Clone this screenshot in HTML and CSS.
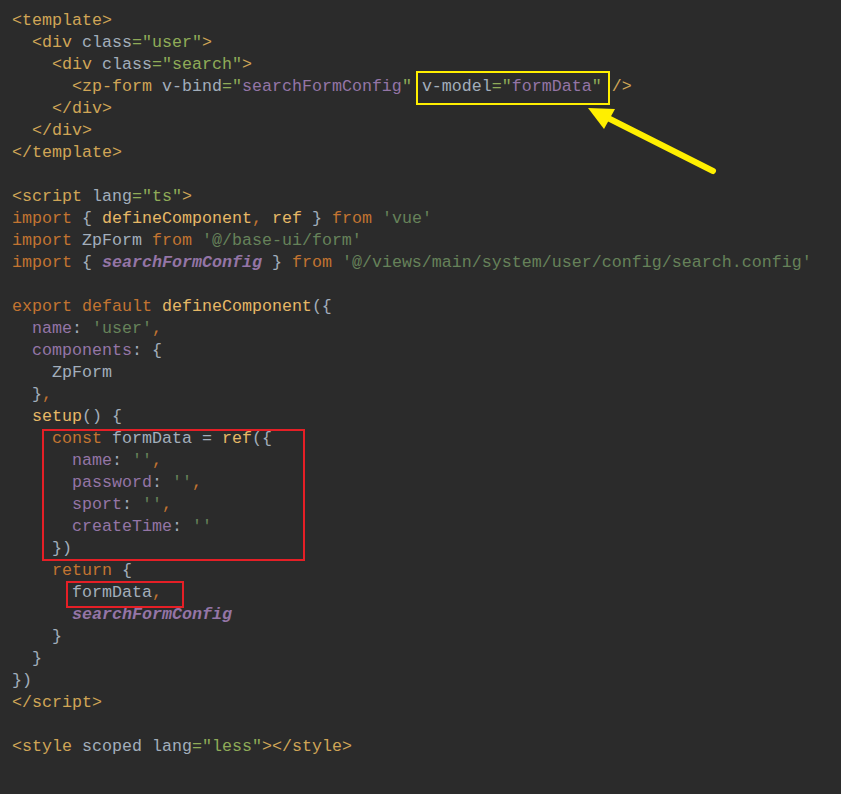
FILE: index.html
```html
<!DOCTYPE html>
<html lang="en">
<head>
    <meta charset="UTF-8">
    <title>user.vue</title>
    <link rel="stylesheet" href="styles.css">
</head>
<body>
    <div class="editor">
<pre class="code"><span class="tag">&lt;template&gt;</span>
  <span class="tag">&lt;div</span> <span class="attr">class</span><span class="val">="user"</span><span class="tag">&gt;</span>
    <span class="tag">&lt;div</span> <span class="attr">class</span><span class="val">="search"</span><span class="tag">&gt;</span>
      <span class="tag">&lt;zp-form</span> <span class="attr">v-bind</span><span class="val">="</span><span class="prop">searchFormConfig</span><span class="val">"</span> <span class="attr">v-model</span><span class="val">="</span><span class="prop">formData</span><span class="val">"</span> <span class="tag">/&gt;</span>
    <span class="tag">&lt;/div&gt;</span>
  <span class="tag">&lt;/div&gt;</span>
<span class="tag">&lt;/template&gt;</span>

<span class="tag">&lt;script</span> <span class="attr">lang</span><span class="val">="ts"</span><span class="tag">&gt;</span>
<span class="kw">import</span> { <span class="fn">defineComponent</span><span class="kw">,</span> <span class="fn">ref</span> } <span class="kw">from</span> <span class="str">'vue'</span>
<span class="kw">import</span> ZpForm <span class="kw">from</span> <span class="str">'@/base-ui/form'</span>
<span class="kw">import</span> { <span class="const">searchFormConfig</span> } <span class="kw">from</span> <span class="str">'@/views/main/system/user/config/search.config'</span>

<span class="kw">export default</span> <span class="fn">defineComponent</span>({
  <span class="prop">name</span>: <span class="str">'user'</span><span class="kw">,</span>
  <span class="prop">components</span>: {
    ZpForm
  }<span class="kw">,</span>
  <span class="fn">setup</span>() {
    <span class="kw">const</span> formData = <span class="fn">ref</span>({
      <span class="prop">name</span>: <span class="str">''</span><span class="kw">,</span>
      <span class="prop">password</span>: <span class="str">''</span><span class="kw">,</span>
      <span class="prop">sport</span>: <span class="str">''</span><span class="kw">,</span>
      <span class="prop">createTime</span>: <span class="str">''</span>
    })
    <span class="kw">return</span> {
      formData<span class="kw">,</span>
      <span class="const">searchFormConfig</span>
    }
  }
})
<span class="tag">&lt;/script&gt;</span>

<span class="tag">&lt;style</span> <span class="attr">scoped</span> <span class="attr">lang</span><span class="val">="less"</span><span class="tag">&gt;&lt;/style&gt;</span></pre>

        <!-- annotations drawn over the code -->
        <span class="mark mark-yellow"></span>
        <span class="mark mark-red mark-ref"></span>
        <span class="mark mark-red mark-return"></span>
        <svg class="arrow" width="140" height="85" viewBox="580 95 140 85">
            <line x1="600" y1="114" x2="713" y2="171" stroke="#ffef00" stroke-width="6" stroke-linecap="round"/>
            <polygon points="588,108 615,109 604,129" fill="#ffef00"/>
        </svg>
    </div>
</body>
</html>
```

FILE: styles.css
```css
:root {
    --bg: #2b2b2b;
    --text: #a2aebb;
    --tag: #d0a556;
    --val: #8fab58;
    --keyword: #c27431;
    --func: #e6b866;
    --string: #66825a;
    --field: #9475a6;
    --yellow: #ffef00;
    --red: #e51f26;
}

html,
body {
    margin: 0;
    padding: 0;
    background-color: var(--bg);
}

.editor {
    position: relative;
    width: 841px;
    height: 794px;
    background-color: var(--bg);
    overflow: hidden;
}

.code {
    margin: 0;
    padding: 10px 12px;
    font-family: "Liberation Mono", "DejaVu Sans Mono", monospace;
    font-size: 16.67px;
    line-height: 22px;
    color: var(--text);
    white-space: pre;
}

.tag { color: var(--tag); }
.attr { color: var(--text); }
.val { color: var(--val); }
.kw { color: var(--keyword); }
.fn { color: var(--func); }
.str { color: var(--string); }
.prop { color: var(--field); }
.const {
    color: var(--field);
    font-style: italic;
    font-weight: bold;
}

.mark {
    position: absolute;
    box-sizing: border-box;
    border: 2px solid;
}

.mark-yellow {
    left: 416px;
    top: 71px;
    width: 194px;
    height: 34px;
    border-color: var(--yellow);
}

.mark-red { border-color: var(--red); }

.mark-ref {
    left: 42px;
    top: 429px;
    width: 263px;
    height: 132px;
}

.mark-return {
    left: 66px;
    top: 581px;
    width: 118px;
    height: 27px;
}

.arrow {
    position: absolute;
    left: 580px;
    top: 95px;
}
```
